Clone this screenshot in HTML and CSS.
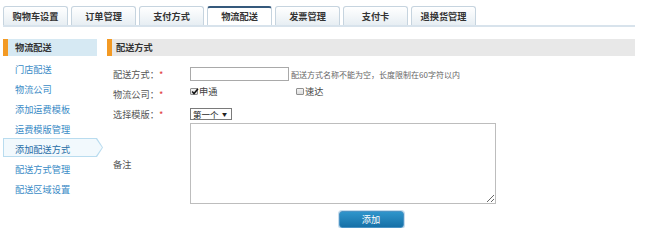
FILE: index.html
```html
<!DOCTYPE html>
<html lang="zh-CN">
<head>
<meta charset="utf-8">
<title>物流配送</title>
<link rel="stylesheet" href="styles.css">
</head>
<body>
<div class="page">
  <ul class="tabs">
    <li class="tab">购物车设置</li>
    <li class="tab">订单管理</li>
    <li class="tab">支付方式</li>
    <li class="tab active">物流配送</li>
    <li class="tab">发票管理</li>
    <li class="tab">支付卡</li>
    <li class="tab">退换货管理</li>
  </ul>
  <div class="main">
    <aside class="sidebar">
      <div class="side-head">物流配送</div>
      <ul class="side-list">
        <li class="side-item">门店配送</li>
        <li class="side-item">物流公司</li>
        <li class="side-item">添加运费模板</li>
        <li class="side-item">运费模版管理</li>
        <li class="side-item current"><span class="side-text">添加配送方式</span></li>
        <li class="side-item">配送方式管理</li>
        <li class="side-item">配送区域设置</li>
      </ul>
    </aside>
    <section class="content">
      <div class="content-head">配送方式</div>
      <form class="form">
        <div class="row">
          <label class="lbl">配送方式：<em>*</em></label>
          <input class="txt" type="text">
          <span class="hint">配送方式名称不能为空，长度限制在60字符以内</span>
        </div>
        <div class="row row-check">
          <label class="lbl">物流公司：<em>*</em></label>
          <div class="checks">
            <span class="chk chk-first"><span class="box checked"><svg viewBox="0 0 8 7" width="8" height="7"><path d="M1.2 3.6 L3 5.6 L7 0.8" fill="none" stroke="#111" stroke-width="1.5"/></svg></span><span class="chk-text">申通</span></span>
            <span class="chk"><span class="box"></span><span class="chk-text">速达</span></span>
          </div>
        </div>
        <div class="row row-sel">
          <label class="lbl">选择模版：<em>*</em></label>
          <span class="sel-wrap">
            <select class="sel"><option>第一个</option></select>
            <span class="sel-arrow">▼</span>
          </span>
        </div>
        <div class="row row-area">
          <label class="lbl">备注</label>
          <textarea class="area"></textarea>
        </div>
        <div class="actions">
          <button class="btn" type="button">添加</button>
        </div>
      </form>
    </section>
  </div>
</div>
</body>
</html>
```
FILE: styles.css
```css
body {
  margin: 0;
  background: #fff;
  font-family: "Noto Sans CJK SC", "Noto Sans", sans-serif;
  font-size: 9.2px;
  color: #333;
}

.page {
  width: 659px;
}

.tabs {
  display: flex;
  gap: 3px;
  list-style: none;
  margin: 6px 0 0 3px;
  padding: 0;
  width: 632px;
  height: 19px;
  border-bottom: 2px solid #d8e3ec;
}

.tab {
  width: 65px;
  box-sizing: border-box;
  border: 1px solid #c6d4df;
  border-bottom: none;
  border-radius: 3px 3px 0 0;
  background: linear-gradient(#ffffff, #e7eef3);
  text-align: center;
  line-height: 18px;
  font-weight: bold;
  color: #333;
}

.tab.active {
  background: #fff;
  border-top: 2px solid #35597c;
  line-height: 17px;
}

.main {
  display: flex;
  margin-top: 12px;
  padding-left: 3px;
}

.sidebar {
  width: 94px;
  flex: none;
}

.side-head {
  height: 17px;
  line-height: 17px;
  background: #d6e9f3;
  border-left: 5px solid #f39a24;
  padding-left: 7px;
  font-weight: bold;
  color: #333;
}

.side-list {
  list-style: none;
  margin: 3px 0 0;
  padding: 0;
}

.side-item {
  height: 20px;
  line-height: 20px;
  padding-left: 12px;
  color: #3a8bc6;
}

.current {
  position: relative;
  color: #266da6;
}

.current::before,
.current::after {
  content: "";
  position: absolute;
  clip-path: polygon(0 0, calc(100% - 6px) 0, 100% 50%, calc(100% - 6px) 100%, 0 100%);
}

.current::before {
  left: 0;
  top: -1px;
  bottom: 2px;
  right: -6px;
  background: #b9dcef;
}

.current::after {
  left: 1px;
  top: 0;
  bottom: 3px;
  right: -5px;
  background: #f2f9fd;
}

.side-text {
  position: relative;
  z-index: 1;
}

.content {
  margin-left: 10px;
  width: 528px;
  flex: none;
}

.content-head {
  height: 17px;
  line-height: 17px;
  background: #e8e8e8;
  border-left: 5px solid #f39a24;
  padding-left: 4px;
  font-weight: bold;
  color: #333;
}

.form {
  margin: 0;
  padding-top: 8px;
}

.row {
  display: flex;
  align-items: center;
  height: 20px;
  padding-left: 6px;
}

.lbl {
  width: 77px;
  flex: none;
  color: #555;
}

.lbl em {
  color: #e23b3b;
  font-style: normal;
}

.txt {
  width: 99px;
  height: 14px;
  box-sizing: border-box;
  border: 1px solid #a9a9a9;
  margin: 0;
  padding: 0;
}

.hint {
  margin-left: 2px;
  font-size: 8px;
  color: #666;
}

.row-check {
  align-items: flex-start;
}

.row-check .lbl {
  line-height: 20px;
}

.checks {
  display: flex;
  margin-top: 3px;
}

.chk {
  display: flex;
  align-items: flex-end;
}

.chk-first {
  width: 106px;
}

.box {
  display: block;
  width: 8px;
  height: 7px;
  box-sizing: border-box;
  border: 1px solid #8f8f8f;
  border-radius: 1px;
  background: linear-gradient(#f4f4f4, #dcdcdc);
  position: relative;
}

.box svg {
  position: absolute;
  left: 0;
  top: -1px;
}

.chk-text {
  margin-left: 1px;
  line-height: 8px;
  color: #444;
}

.row-sel {
  height: 19px;
}

.sel-wrap {
  position: relative;
  display: block;
  width: 42px;
  height: 12px;
}

.sel {
  appearance: none;
  -webkit-appearance: none;
  display: block;
  width: 42px;
  height: 12px;
  box-sizing: border-box;
  border: 1px solid #7a7a7a;
  border-radius: 0;
  background: #fff;
  margin: 0;
  padding: 0 0 0 2px;
  font-family: "Noto Sans CJK SC", sans-serif;
  font-size: 8.5px;
  line-height: 10px;
  color: #111;
}

.sel-arrow {
  position: absolute;
  right: 5px;
  top: 3px;
  font-size: 5px;
  line-height: 6px;
  color: #222;
  pointer-events: none;
}

.row-area {
  height: 81px;
}

.area {
  width: 306px;
  height: 81px;
  box-sizing: border-box;
  border: 1px solid #bdbdbd;
  margin: 0;
  padding: 2px;
  font-family: "Noto Sans CJK SC", sans-serif;
  font-size: 9px;
}

.actions {
  display: flex;
  justify-content: center;
  margin-top: 7px;
}

.btn {
  width: 65px;
  height: 17px;
  box-sizing: border-box;
  border: 1px solid #4a93c4;
  border-radius: 3px;
  background: linear-gradient(#2f95cb, #1670a7);
  box-shadow: 0 0 0 1px #c5dced;
  color: #fff;
  font-family: "Noto Sans CJK SC", sans-serif;
  font-size: 9.2px;
  padding: 0;
  line-height: 15px;
}
```
